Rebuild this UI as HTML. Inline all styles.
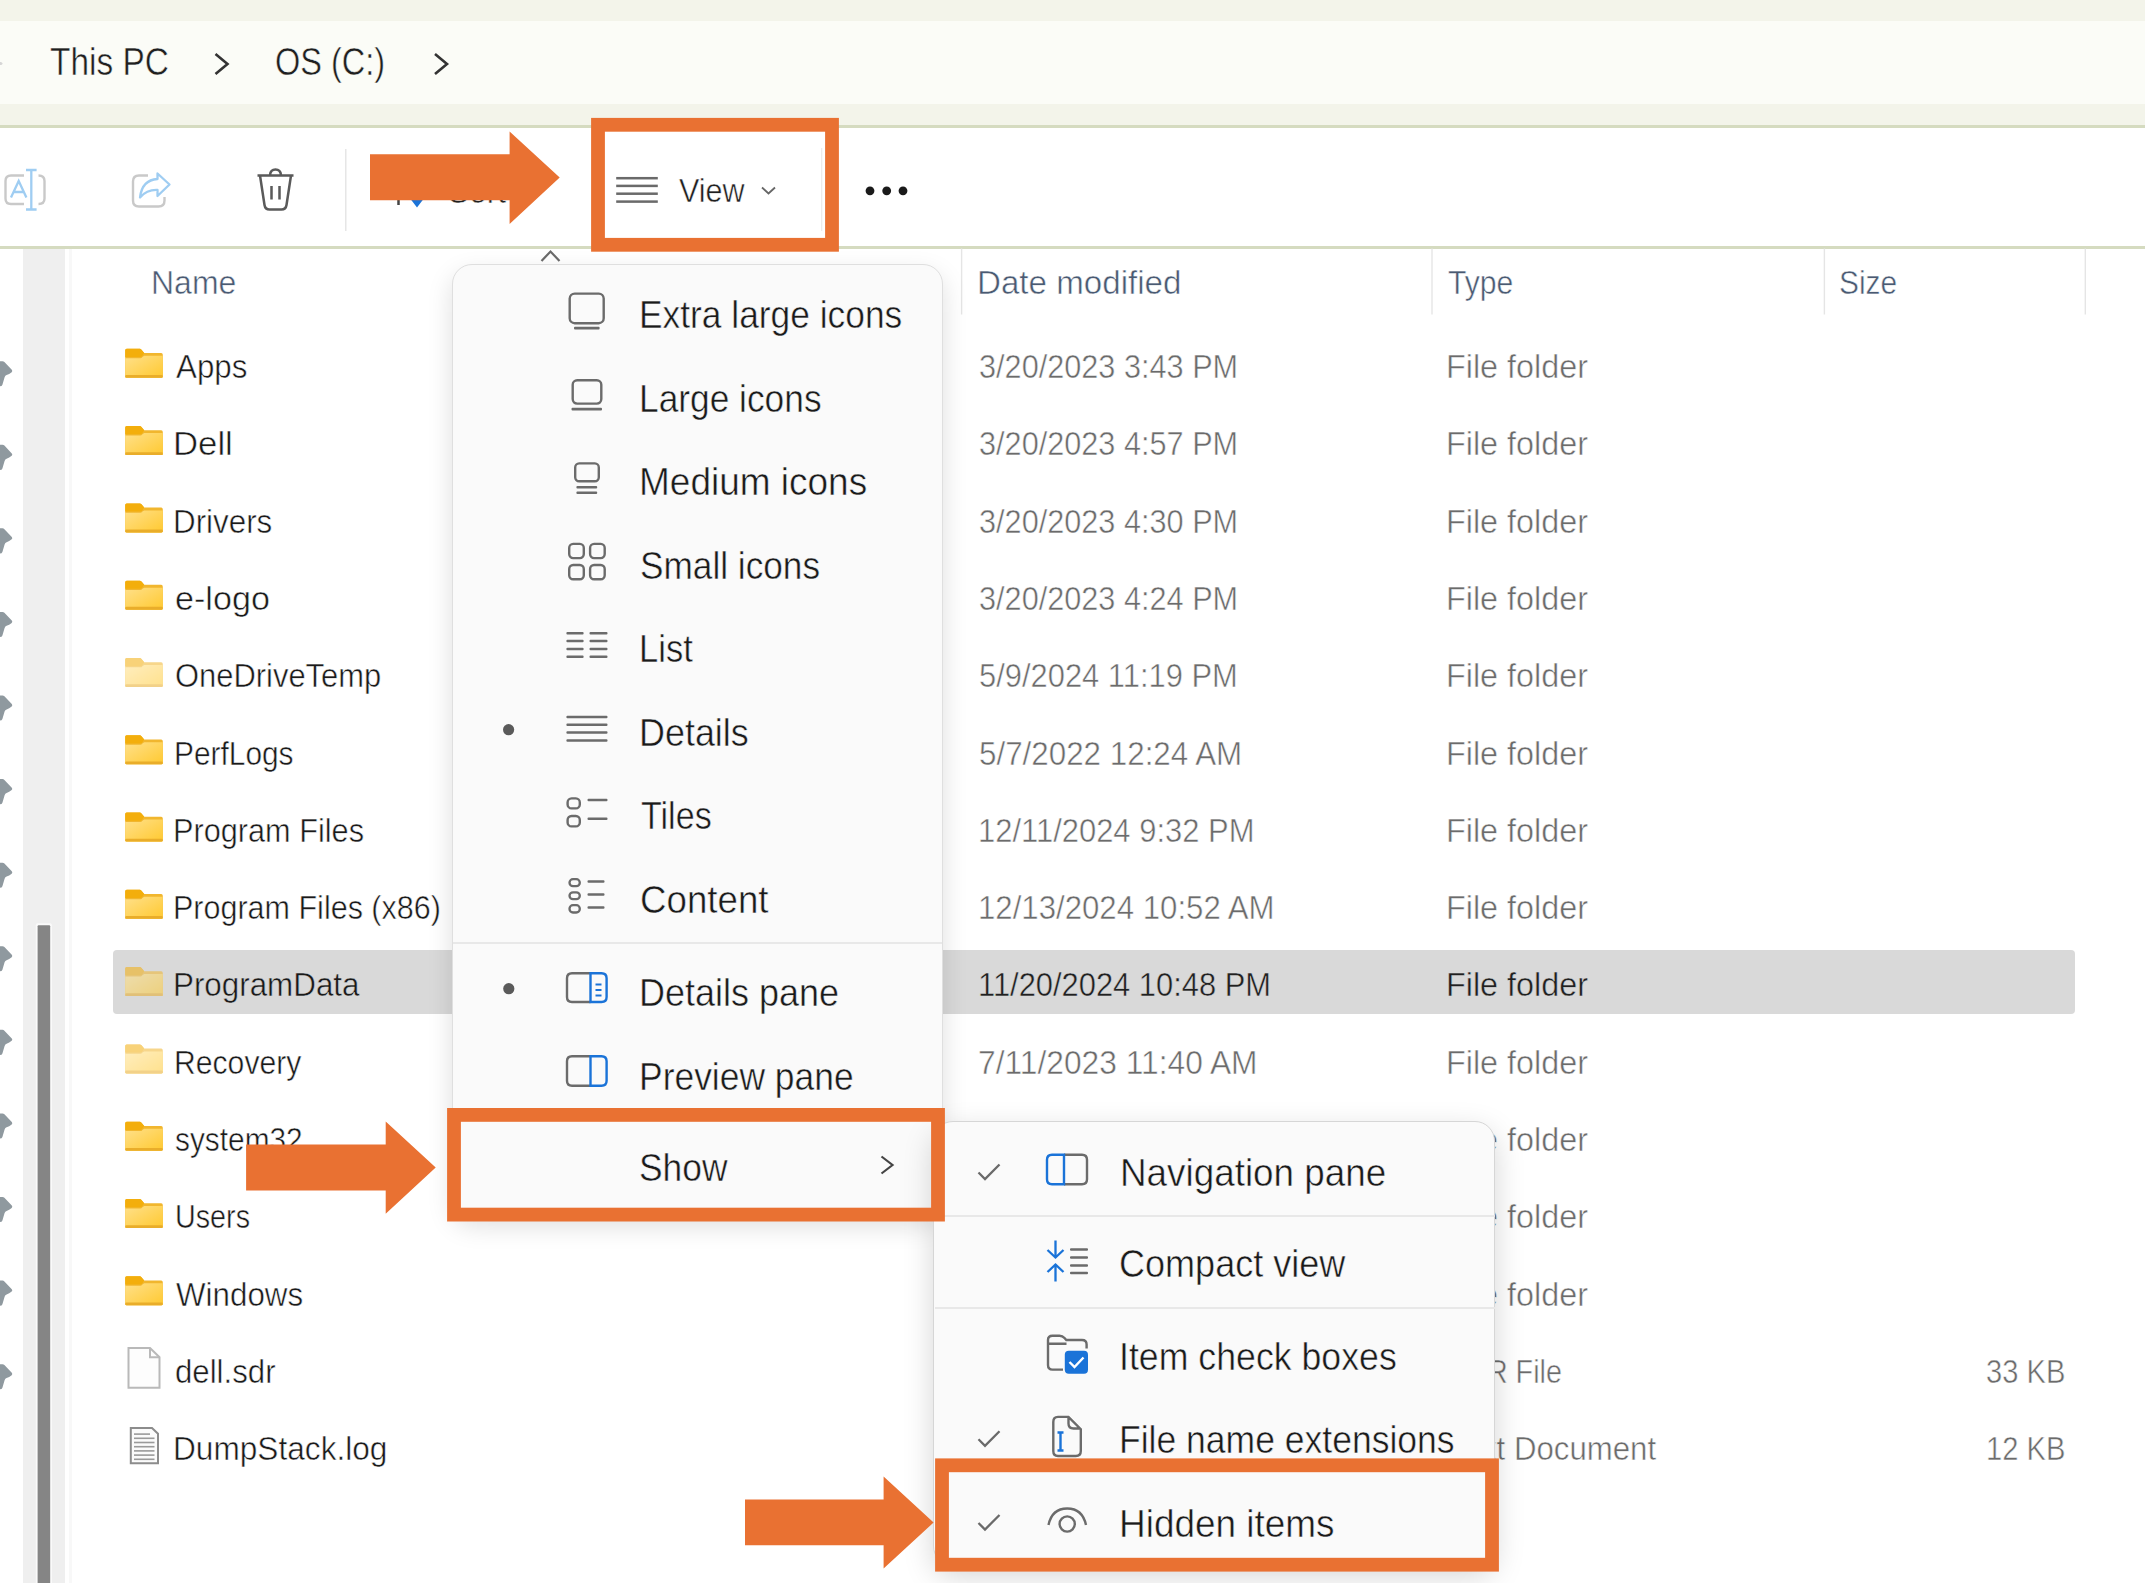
<!DOCTYPE html><html><head><meta charset="utf-8"><style>
html,body{margin:0;padding:0;width:2145px;height:1583px;overflow:hidden;background:#fff}
body{position:relative;font-family:"Liberation Sans",sans-serif}
.a{position:absolute}
.t{position:absolute;line-height:1;white-space:nowrap;transform-origin:0 0}
svg{position:absolute;left:0;top:0}
</style></head><body>
<div class="a" style="left:0;top:0;width:2145px;height:21px;background:#f3f4ea"></div>
<div class="a" style="left:0;top:21px;width:2145px;height:83px;background:#fbfcf7"></div>
<div class="a" style="left:0;top:104px;width:2145px;height:21px;background:#f3f4ea"></div>
<div class="a" style="left:0;top:125px;width:2145px;height:2.5px;background:#d5dbc0"></div>
<div class="a" style="left:0;top:246px;width:2145px;height:2.5px;background:#d5dbc0"></div>
<div class="a" style="left:23px;top:248.5px;width:41.6px;height:1335px;background:#efefef"></div>
<div class="a" style="left:69px;top:248.5px;width:2.6px;height:1335px;background:#f8f8f8"></div>
<div class="a" style="left:112.7px;top:950.3px;width:1962.8px;height:64.1px;background:#d9d9d9;border-radius:4px"></div>
<svg width="2145" height="1583" viewBox="0 0 2145 1583">
<defs><linearGradient id="fg" x1="0" y1="0" x2="1" y2="1"><stop offset="0" stop-color="#ffe08a"/><stop offset="1" stop-color="#ffc930"/></linearGradient></defs>
<polyline points="215.5,54 227.5,64 215.5,74" fill="none" stroke="#333" stroke-width="2.6"/>
<polyline points="435,54 447,64 435,74" fill="none" stroke="#333" stroke-width="2.6"/>
<path d="M24,175.5 H11 Q5.5,175.5 5.5,181 V198.5 Q5.5,204 11,204 H24 M38.5,175.5 Q44.5,175.5 44.5,181 V198.5 Q44.5,204 38.5,204" fill="none" stroke="#c9c9c9" stroke-width="2.4"/>
<path d="M31.3,170 V209.5 M26,170 H36.6 M26,209.5 H36.6" fill="none" stroke="#9fcdf2" stroke-width="2.3"/>
<path d="M11,197.5 L18.7,181 L26.4,197.5 M13.8,192 H23.6" fill="none" stroke="#9fcdf2" stroke-width="2.3"/>
<path d="M148,175.5 H139 Q133,175.5 133,181.5 V200.5 Q133,206.5 139,206.5 H158.5 Q164.5,206.5 164.5,200.5 V197" fill="none" stroke="#c9c9c9" stroke-width="2.4"/>
<path d="M157.5,173.5 L169.5,184.5 L157.5,196 V190 Q147,189.5 140,197.5 Q142,180 157.5,179 Z" fill="none" stroke="#9fcdf2" stroke-width="2.3" stroke-linejoin="round"/>
<path d="M257.5,175.5 H293.5 M260,175.5 L264.5,205 Q265.2,209.5 269.5,209.5 H281.5 Q285.8,209.5 286.5,205 L291,175.5 M270,175 Q270.5,169.5 275.5,169.5 Q280.5,169.5 281,175 M271.5,186 V199.5 M279.5,186 V199.5" fill="none" stroke="#5a5a5a" stroke-width="2.5"/>
<rect x="345" y="149" width="1.5" height="82" fill="#e6e6e6"/>
<path d="M398.5,160 V205" stroke="#444" stroke-width="2.5"/>
<polygon points="410.5,199 423.5,199 417,207.5" fill="#1a73d8"/>
<path d="M417,160 V200" stroke="#1a73d8" stroke-width="2.5"/>
<rect x="616.2" y="176.95" width="41.6" height="2.5" fill="#6a6a6a"/>
<rect x="616.2" y="184.65" width="41.6" height="2.5" fill="#6a6a6a"/>
<rect x="616.2" y="192.45" width="41.6" height="2.5" fill="#6a6a6a"/>
<rect x="616.2" y="200.35" width="41.6" height="2.5" fill="#6a6a6a"/>
<polyline points="762,187.5 768.5,193.5 775,187.5" fill="none" stroke="#666" stroke-width="1.8"/>
<rect x="821" y="148" width="1.3" height="83" fill="#ececec"/>
<circle cx="870" cy="190.8" r="4.4" fill="#1a1a1a"/>
<circle cx="886.7" cy="190.8" r="4.4" fill="#1a1a1a"/>
<circle cx="903" cy="190.8" r="4.4" fill="#1a1a1a"/>
<rect x="960.9" y="248.5" width="1.4" height="66" fill="#e5e5e5"/>
<rect x="1431.3" y="248.5" width="1.4" height="66" fill="#e5e5e5"/>
<rect x="1823.7" y="248.5" width="1.4" height="66" fill="#e5e5e5"/>
<rect x="2084.6000000000004" y="248.5" width="1.4" height="66" fill="#e5e5e5"/>
<path transform="translate(0,361.20)" d="M0,0 L2.5,0 Q3.6,0 4.4,0.8 L11.8,8.6 Q12.9,9.9 11.7,11 Q9.2,13.1 6.6,13.9 Q5.1,14.5 4.6,16.1 L2.4,23.6 Q1.9,25.1 0,25.1 Z" fill="#8f999f"/>
<path transform="translate(0,444.78)" d="M0,0 L2.5,0 Q3.6,0 4.4,0.8 L11.8,8.6 Q12.9,9.9 11.7,11 Q9.2,13.1 6.6,13.9 Q5.1,14.5 4.6,16.1 L2.4,23.6 Q1.9,25.1 0,25.1 Z" fill="#8f999f"/>
<path transform="translate(0,528.36)" d="M0,0 L2.5,0 Q3.6,0 4.4,0.8 L11.8,8.6 Q12.9,9.9 11.7,11 Q9.2,13.1 6.6,13.9 Q5.1,14.5 4.6,16.1 L2.4,23.6 Q1.9,25.1 0,25.1 Z" fill="#8f999f"/>
<path transform="translate(0,611.94)" d="M0,0 L2.5,0 Q3.6,0 4.4,0.8 L11.8,8.6 Q12.9,9.9 11.7,11 Q9.2,13.1 6.6,13.9 Q5.1,14.5 4.6,16.1 L2.4,23.6 Q1.9,25.1 0,25.1 Z" fill="#8f999f"/>
<path transform="translate(0,695.52)" d="M0,0 L2.5,0 Q3.6,0 4.4,0.8 L11.8,8.6 Q12.9,9.9 11.7,11 Q9.2,13.1 6.6,13.9 Q5.1,14.5 4.6,16.1 L2.4,23.6 Q1.9,25.1 0,25.1 Z" fill="#8f999f"/>
<path transform="translate(0,779.10)" d="M0,0 L2.5,0 Q3.6,0 4.4,0.8 L11.8,8.6 Q12.9,9.9 11.7,11 Q9.2,13.1 6.6,13.9 Q5.1,14.5 4.6,16.1 L2.4,23.6 Q1.9,25.1 0,25.1 Z" fill="#8f999f"/>
<path transform="translate(0,862.68)" d="M0,0 L2.5,0 Q3.6,0 4.4,0.8 L11.8,8.6 Q12.9,9.9 11.7,11 Q9.2,13.1 6.6,13.9 Q5.1,14.5 4.6,16.1 L2.4,23.6 Q1.9,25.1 0,25.1 Z" fill="#8f999f"/>
<path transform="translate(0,946.26)" d="M0,0 L2.5,0 Q3.6,0 4.4,0.8 L11.8,8.6 Q12.9,9.9 11.7,11 Q9.2,13.1 6.6,13.9 Q5.1,14.5 4.6,16.1 L2.4,23.6 Q1.9,25.1 0,25.1 Z" fill="#8f999f"/>
<path transform="translate(0,1029.84)" d="M0,0 L2.5,0 Q3.6,0 4.4,0.8 L11.8,8.6 Q12.9,9.9 11.7,11 Q9.2,13.1 6.6,13.9 Q5.1,14.5 4.6,16.1 L2.4,23.6 Q1.9,25.1 0,25.1 Z" fill="#8f999f"/>
<path transform="translate(0,1113.42)" d="M0,0 L2.5,0 Q3.6,0 4.4,0.8 L11.8,8.6 Q12.9,9.9 11.7,11 Q9.2,13.1 6.6,13.9 Q5.1,14.5 4.6,16.1 L2.4,23.6 Q1.9,25.1 0,25.1 Z" fill="#8f999f"/>
<path transform="translate(0,1197.00)" d="M0,0 L2.5,0 Q3.6,0 4.4,0.8 L11.8,8.6 Q12.9,9.9 11.7,11 Q9.2,13.1 6.6,13.9 Q5.1,14.5 4.6,16.1 L2.4,23.6 Q1.9,25.1 0,25.1 Z" fill="#8f999f"/>
<path transform="translate(0,1280.58)" d="M0,0 L2.5,0 Q3.6,0 4.4,0.8 L11.8,8.6 Q12.9,9.9 11.7,11 Q9.2,13.1 6.6,13.9 Q5.1,14.5 4.6,16.1 L2.4,23.6 Q1.9,25.1 0,25.1 Z" fill="#8f999f"/>
<path transform="translate(0,1364.16)" d="M0,0 L2.5,0 Q3.6,0 4.4,0.8 L11.8,8.6 Q12.9,9.9 11.7,11 Q9.2,13.1 6.6,13.9 Q5.1,14.5 4.6,16.1 L2.4,23.6 Q1.9,25.1 0,25.1 Z" fill="#8f999f"/>
<rect x="35.8" y="923.3" width="16.2" height="700" rx="2" fill="#fafafa"/>
<rect x="37.6" y="925.3" width="12.6" height="700" rx="1" fill="#858585"/>
<ellipse cx="0.5" cy="63.5" rx="2" ry="1.6" fill="#d6d6d6"/>
<g transform="translate(125.2,348.8)">
<path d="M1.5,0 H14.5 Q15.5,0 16.5,1.2 L19,4.2 H36 Q37.6,4.2 37.6,6 V27.4 Q37.6,29 36,29 H1.6 Q0,29 0,27.4 V1.5 Q0,0 1.5,0 Z" fill="#f1b62e"/>
<path d="M1.5,0 H14.5 Q15.5,0 16.5,1.2 L19,4.2 L17,7.2 Q16.2,8.2 14.8,8.2 H0 V1.5 Q0,0 1.5,0 Z" fill="#f3ae0c"/>
<path d="M0,9.4 H15 Q16.4,9.4 17.2,8.2 L19,7 H37.6 V27.4 Q37.6,29 36,29 H1.6 Q0,29 0,27.4 Z" fill="url(#fg)"/>
<rect x="0" y="26.2" width="37.6" height="2.8" rx="1.2" fill="#e9ad2a"/>
</g>
<g transform="translate(125.2,426.09000000000003)">
<path d="M1.5,0 H14.5 Q15.5,0 16.5,1.2 L19,4.2 H36 Q37.6,4.2 37.6,6 V27.4 Q37.6,29 36,29 H1.6 Q0,29 0,27.4 V1.5 Q0,0 1.5,0 Z" fill="#f1b62e"/>
<path d="M1.5,0 H14.5 Q15.5,0 16.5,1.2 L19,4.2 L17,7.2 Q16.2,8.2 14.8,8.2 H0 V1.5 Q0,0 1.5,0 Z" fill="#f3ae0c"/>
<path d="M0,9.4 H15 Q16.4,9.4 17.2,8.2 L19,7 H37.6 V27.4 Q37.6,29 36,29 H1.6 Q0,29 0,27.4 Z" fill="url(#fg)"/>
<rect x="0" y="26.2" width="37.6" height="2.8" rx="1.2" fill="#e9ad2a"/>
</g>
<g transform="translate(125.2,503.38)">
<path d="M1.5,0 H14.5 Q15.5,0 16.5,1.2 L19,4.2 H36 Q37.6,4.2 37.6,6 V27.4 Q37.6,29 36,29 H1.6 Q0,29 0,27.4 V1.5 Q0,0 1.5,0 Z" fill="#f1b62e"/>
<path d="M1.5,0 H14.5 Q15.5,0 16.5,1.2 L19,4.2 L17,7.2 Q16.2,8.2 14.8,8.2 H0 V1.5 Q0,0 1.5,0 Z" fill="#f3ae0c"/>
<path d="M0,9.4 H15 Q16.4,9.4 17.2,8.2 L19,7 H37.6 V27.4 Q37.6,29 36,29 H1.6 Q0,29 0,27.4 Z" fill="url(#fg)"/>
<rect x="0" y="26.2" width="37.6" height="2.8" rx="1.2" fill="#e9ad2a"/>
</g>
<g transform="translate(125.2,580.6700000000001)">
<path d="M1.5,0 H14.5 Q15.5,0 16.5,1.2 L19,4.2 H36 Q37.6,4.2 37.6,6 V27.4 Q37.6,29 36,29 H1.6 Q0,29 0,27.4 V1.5 Q0,0 1.5,0 Z" fill="#f1b62e"/>
<path d="M1.5,0 H14.5 Q15.5,0 16.5,1.2 L19,4.2 L17,7.2 Q16.2,8.2 14.8,8.2 H0 V1.5 Q0,0 1.5,0 Z" fill="#f3ae0c"/>
<path d="M0,9.4 H15 Q16.4,9.4 17.2,8.2 L19,7 H37.6 V27.4 Q37.6,29 36,29 H1.6 Q0,29 0,27.4 Z" fill="url(#fg)"/>
<rect x="0" y="26.2" width="37.6" height="2.8" rx="1.2" fill="#e9ad2a"/>
</g>
<g transform="translate(125.2,657.96)" opacity="0.55">
<path d="M1.5,0 H14.5 Q15.5,0 16.5,1.2 L19,4.2 H36 Q37.6,4.2 37.6,6 V27.4 Q37.6,29 36,29 H1.6 Q0,29 0,27.4 V1.5 Q0,0 1.5,0 Z" fill="#f1b62e"/>
<path d="M1.5,0 H14.5 Q15.5,0 16.5,1.2 L19,4.2 L17,7.2 Q16.2,8.2 14.8,8.2 H0 V1.5 Q0,0 1.5,0 Z" fill="#f3ae0c"/>
<path d="M0,9.4 H15 Q16.4,9.4 17.2,8.2 L19,7 H37.6 V27.4 Q37.6,29 36,29 H1.6 Q0,29 0,27.4 Z" fill="url(#fg)"/>
<rect x="0" y="26.2" width="37.6" height="2.8" rx="1.2" fill="#e9ad2a"/>
</g>
<g transform="translate(125.2,735.25)">
<path d="M1.5,0 H14.5 Q15.5,0 16.5,1.2 L19,4.2 H36 Q37.6,4.2 37.6,6 V27.4 Q37.6,29 36,29 H1.6 Q0,29 0,27.4 V1.5 Q0,0 1.5,0 Z" fill="#f1b62e"/>
<path d="M1.5,0 H14.5 Q15.5,0 16.5,1.2 L19,4.2 L17,7.2 Q16.2,8.2 14.8,8.2 H0 V1.5 Q0,0 1.5,0 Z" fill="#f3ae0c"/>
<path d="M0,9.4 H15 Q16.4,9.4 17.2,8.2 L19,7 H37.6 V27.4 Q37.6,29 36,29 H1.6 Q0,29 0,27.4 Z" fill="url(#fg)"/>
<rect x="0" y="26.2" width="37.6" height="2.8" rx="1.2" fill="#e9ad2a"/>
</g>
<g transform="translate(125.2,812.54)">
<path d="M1.5,0 H14.5 Q15.5,0 16.5,1.2 L19,4.2 H36 Q37.6,4.2 37.6,6 V27.4 Q37.6,29 36,29 H1.6 Q0,29 0,27.4 V1.5 Q0,0 1.5,0 Z" fill="#f1b62e"/>
<path d="M1.5,0 H14.5 Q15.5,0 16.5,1.2 L19,4.2 L17,7.2 Q16.2,8.2 14.8,8.2 H0 V1.5 Q0,0 1.5,0 Z" fill="#f3ae0c"/>
<path d="M0,9.4 H15 Q16.4,9.4 17.2,8.2 L19,7 H37.6 V27.4 Q37.6,29 36,29 H1.6 Q0,29 0,27.4 Z" fill="url(#fg)"/>
<rect x="0" y="26.2" width="37.6" height="2.8" rx="1.2" fill="#e9ad2a"/>
</g>
<g transform="translate(125.2,889.8300000000002)">
<path d="M1.5,0 H14.5 Q15.5,0 16.5,1.2 L19,4.2 H36 Q37.6,4.2 37.6,6 V27.4 Q37.6,29 36,29 H1.6 Q0,29 0,27.4 V1.5 Q0,0 1.5,0 Z" fill="#f1b62e"/>
<path d="M1.5,0 H14.5 Q15.5,0 16.5,1.2 L19,4.2 L17,7.2 Q16.2,8.2 14.8,8.2 H0 V1.5 Q0,0 1.5,0 Z" fill="#f3ae0c"/>
<path d="M0,9.4 H15 Q16.4,9.4 17.2,8.2 L19,7 H37.6 V27.4 Q37.6,29 36,29 H1.6 Q0,29 0,27.4 Z" fill="url(#fg)"/>
<rect x="0" y="26.2" width="37.6" height="2.8" rx="1.2" fill="#e9ad2a"/>
</g>
<g transform="translate(125.2,967.1200000000001)" opacity="0.55">
<path d="M1.5,0 H14.5 Q15.5,0 16.5,1.2 L19,4.2 H36 Q37.6,4.2 37.6,6 V27.4 Q37.6,29 36,29 H1.6 Q0,29 0,27.4 V1.5 Q0,0 1.5,0 Z" fill="#f1b62e"/>
<path d="M1.5,0 H14.5 Q15.5,0 16.5,1.2 L19,4.2 L17,7.2 Q16.2,8.2 14.8,8.2 H0 V1.5 Q0,0 1.5,0 Z" fill="#f3ae0c"/>
<path d="M0,9.4 H15 Q16.4,9.4 17.2,8.2 L19,7 H37.6 V27.4 Q37.6,29 36,29 H1.6 Q0,29 0,27.4 Z" fill="url(#fg)"/>
<rect x="0" y="26.2" width="37.6" height="2.8" rx="1.2" fill="#e9ad2a"/>
</g>
<g transform="translate(125.2,1044.41)" opacity="0.55">
<path d="M1.5,0 H14.5 Q15.5,0 16.5,1.2 L19,4.2 H36 Q37.6,4.2 37.6,6 V27.4 Q37.6,29 36,29 H1.6 Q0,29 0,27.4 V1.5 Q0,0 1.5,0 Z" fill="#f1b62e"/>
<path d="M1.5,0 H14.5 Q15.5,0 16.5,1.2 L19,4.2 L17,7.2 Q16.2,8.2 14.8,8.2 H0 V1.5 Q0,0 1.5,0 Z" fill="#f3ae0c"/>
<path d="M0,9.4 H15 Q16.4,9.4 17.2,8.2 L19,7 H37.6 V27.4 Q37.6,29 36,29 H1.6 Q0,29 0,27.4 Z" fill="url(#fg)"/>
<rect x="0" y="26.2" width="37.6" height="2.8" rx="1.2" fill="#e9ad2a"/>
</g>
<g transform="translate(125.2,1121.7)">
<path d="M1.5,0 H14.5 Q15.5,0 16.5,1.2 L19,4.2 H36 Q37.6,4.2 37.6,6 V27.4 Q37.6,29 36,29 H1.6 Q0,29 0,27.4 V1.5 Q0,0 1.5,0 Z" fill="#f1b62e"/>
<path d="M1.5,0 H14.5 Q15.5,0 16.5,1.2 L19,4.2 L17,7.2 Q16.2,8.2 14.8,8.2 H0 V1.5 Q0,0 1.5,0 Z" fill="#f3ae0c"/>
<path d="M0,9.4 H15 Q16.4,9.4 17.2,8.2 L19,7 H37.6 V27.4 Q37.6,29 36,29 H1.6 Q0,29 0,27.4 Z" fill="url(#fg)"/>
<rect x="0" y="26.2" width="37.6" height="2.8" rx="1.2" fill="#e9ad2a"/>
</g>
<g transform="translate(125.2,1198.99)">
<path d="M1.5,0 H14.5 Q15.5,0 16.5,1.2 L19,4.2 H36 Q37.6,4.2 37.6,6 V27.4 Q37.6,29 36,29 H1.6 Q0,29 0,27.4 V1.5 Q0,0 1.5,0 Z" fill="#f1b62e"/>
<path d="M1.5,0 H14.5 Q15.5,0 16.5,1.2 L19,4.2 L17,7.2 Q16.2,8.2 14.8,8.2 H0 V1.5 Q0,0 1.5,0 Z" fill="#f3ae0c"/>
<path d="M0,9.4 H15 Q16.4,9.4 17.2,8.2 L19,7 H37.6 V27.4 Q37.6,29 36,29 H1.6 Q0,29 0,27.4 Z" fill="url(#fg)"/>
<rect x="0" y="26.2" width="37.6" height="2.8" rx="1.2" fill="#e9ad2a"/>
</g>
<g transform="translate(125.2,1276.28)">
<path d="M1.5,0 H14.5 Q15.5,0 16.5,1.2 L19,4.2 H36 Q37.6,4.2 37.6,6 V27.4 Q37.6,29 36,29 H1.6 Q0,29 0,27.4 V1.5 Q0,0 1.5,0 Z" fill="#f1b62e"/>
<path d="M1.5,0 H14.5 Q15.5,0 16.5,1.2 L19,4.2 L17,7.2 Q16.2,8.2 14.8,8.2 H0 V1.5 Q0,0 1.5,0 Z" fill="#f3ae0c"/>
<path d="M0,9.4 H15 Q16.4,9.4 17.2,8.2 L19,7 H37.6 V27.4 Q37.6,29 36,29 H1.6 Q0,29 0,27.4 Z" fill="url(#fg)"/>
<rect x="0" y="26.2" width="37.6" height="2.8" rx="1.2" fill="#e9ad2a"/>
</g>
<path d="M128.5,1347.97 H150 L159.5,1357.17 V1387.67 H128.5 Z" fill="#fdfdfd" stroke="#b9b9b9" stroke-width="2"/>
<path d="M150,1347.97 V1357.17 H159.5" fill="none" stroke="#b9b9b9" stroke-width="2"/>
<path d="M130.8,1428.0600000000002 H152 L158,1433.7600000000002 V1463.2600000000002 H130.8 Z" fill="#fbfbfb" stroke="#8c8c8c" stroke-width="2"/>
<rect x="134" y="1433.3" width="16" height="1.6" fill="#9a9a9a"/>
<rect x="134" y="1437.5" width="20.5" height="1.6" fill="#9a9a9a"/>
<rect x="134" y="1441.7" width="20.5" height="1.6" fill="#9a9a9a"/>
<rect x="134" y="1445.9" width="20.5" height="1.6" fill="#9a9a9a"/>
<rect x="134" y="1450.1" width="20.5" height="1.6" fill="#9a9a9a"/>
<rect x="134" y="1454.3" width="20.5" height="1.6" fill="#9a9a9a"/>
<rect x="134" y="1458.5" width="20.5" height="1.6" fill="#9a9a9a"/>
</svg>
<div class="t" style="left:49.54px;top:42.84px;font-size:38.7px;color:#1f1f1f;-webkit-text-stroke:0.5px #fbfcf7;transform:scaleX(0.8637)">This PC</div>
<div class="t" style="left:275.32px;top:42.84px;font-size:38.7px;color:#1f1f1f;-webkit-text-stroke:0.5px #fbfcf7;transform:scaleX(0.8394)">OS (C:)</div>
<div class="t" style="left:678.70px;top:174.43px;font-size:33.4px;color:#1f1f1f;-webkit-text-stroke:0.5px #ffffff;transform:scaleX(0.9139)">View</div>
<div class="t" style="left:448.10px;top:174.73px;font-size:33.4px;color:#1f1f1f;-webkit-text-stroke:0.5px #ffffff;transform:scaleX(0.9492)">Sort</div>
<div class="t" style="left:150.83px;top:266.86px;font-size:32.3px;color:#4a5a72;-webkit-text-stroke:0.5px #ffffff;transform:scaleX(0.9902)">Name</div>
<div class="t" style="left:976.72px;top:266.86px;font-size:32.3px;color:#4a5a72;-webkit-text-stroke:0.5px #ffffff;transform:scaleX(1.0258)">Date modified</div>
<div class="t" style="left:1447.67px;top:266.86px;font-size:32.3px;color:#4a5a72;-webkit-text-stroke:0.5px #ffffff;transform:scaleX(0.9324)">Type</div>
<div class="t" style="left:1838.55px;top:266.86px;font-size:32.3px;color:#4a5a72;-webkit-text-stroke:0.5px #ffffff;transform:scaleX(0.9254)">Size</div>
<div class="t" style="left:176.30px;top:351.09px;font-size:32.5px;color:#1a1a1a;-webkit-text-stroke:0.5px #ffffff;transform:scaleX(0.9630)">Apps</div>
<div class="t" style="left:978.56px;top:351.09px;font-size:32.5px;color:#6b6b6b;-webkit-text-stroke:0.5px #ffffff;transform:scaleX(0.9435)">3/20/2023 3:43 PM</div>
<div class="t" style="left:1445.62px;top:351.09px;font-size:32.5px;color:#6b6b6b;-webkit-text-stroke:0.5px #ffffff;transform:scaleX(0.9950)">File folder</div>
<div class="t" style="left:173.09px;top:428.38px;font-size:32.5px;color:#1a1a1a;-webkit-text-stroke:0.5px #ffffff;transform:scaleX(1.0686)">Dell</div>
<div class="t" style="left:978.56px;top:428.38px;font-size:32.5px;color:#6b6b6b;-webkit-text-stroke:0.5px #ffffff;transform:scaleX(0.9435)">3/20/2023 4:57 PM</div>
<div class="t" style="left:1445.62px;top:428.38px;font-size:32.5px;color:#6b6b6b;-webkit-text-stroke:0.5px #ffffff;transform:scaleX(0.9950)">File folder</div>
<div class="t" style="left:173.41px;top:505.67px;font-size:32.5px;color:#1a1a1a;-webkit-text-stroke:0.5px #ffffff;transform:scaleX(0.9646)">Drivers</div>
<div class="t" style="left:978.56px;top:505.67px;font-size:32.5px;color:#6b6b6b;-webkit-text-stroke:0.5px #ffffff;transform:scaleX(0.9435)">3/20/2023 4:30 PM</div>
<div class="t" style="left:1445.62px;top:505.67px;font-size:32.5px;color:#6b6b6b;-webkit-text-stroke:0.5px #ffffff;transform:scaleX(0.9950)">File folder</div>
<div class="t" style="left:175.25px;top:582.96px;font-size:32.5px;color:#1a1a1a;-webkit-text-stroke:0.5px #ffffff;transform:scaleX(1.0500)">e-logo</div>
<div class="t" style="left:978.56px;top:582.96px;font-size:32.5px;color:#6b6b6b;-webkit-text-stroke:0.5px #ffffff;transform:scaleX(0.9435)">3/20/2023 4:24 PM</div>
<div class="t" style="left:1445.62px;top:582.96px;font-size:32.5px;color:#6b6b6b;-webkit-text-stroke:0.5px #ffffff;transform:scaleX(0.9950)">File folder</div>
<div class="t" style="left:175.35px;top:660.25px;font-size:32.5px;color:#1a1a1a;-webkit-text-stroke:0.5px #ffffff;transform:scaleX(0.9516)">OneDriveTemp</div>
<div class="t" style="left:978.55px;top:660.25px;font-size:32.5px;color:#6b6b6b;-webkit-text-stroke:0.5px #ffffff;transform:scaleX(0.9506)">5/9/2024 11:19 PM</div>
<div class="t" style="left:1445.62px;top:660.25px;font-size:32.5px;color:#6b6b6b;-webkit-text-stroke:0.5px #ffffff;transform:scaleX(0.9950)">File folder</div>
<div class="t" style="left:173.54px;top:737.54px;font-size:32.5px;color:#1a1a1a;-webkit-text-stroke:0.5px #ffffff;transform:scaleX(0.9190)">PerfLogs</div>
<div class="t" style="left:978.54px;top:737.54px;font-size:32.5px;color:#6b6b6b;-webkit-text-stroke:0.5px #ffffff;transform:scaleX(0.9647)">5/7/2022 12:24 AM</div>
<div class="t" style="left:1445.62px;top:737.54px;font-size:32.5px;color:#6b6b6b;-webkit-text-stroke:0.5px #ffffff;transform:scaleX(0.9950)">File folder</div>
<div class="t" style="left:173.47px;top:814.83px;font-size:32.5px;color:#1a1a1a;-webkit-text-stroke:0.5px #ffffff;transform:scaleX(0.9444)">Program Files</div>
<div class="t" style="left:977.60px;top:814.83px;font-size:32.5px;color:#6b6b6b;-webkit-text-stroke:0.5px #ffffff;transform:scaleX(0.9521)">12/11/2024 9:32 PM</div>
<div class="t" style="left:1445.62px;top:814.83px;font-size:32.5px;color:#6b6b6b;-webkit-text-stroke:0.5px #ffffff;transform:scaleX(0.9950)">File folder</div>
<div class="t" style="left:173.48px;top:892.12px;font-size:32.5px;color:#1a1a1a;-webkit-text-stroke:0.5px #ffffff;transform:scaleX(0.9388)">Program Files (x86)</div>
<div class="t" style="left:977.58px;top:892.12px;font-size:32.5px;color:#6b6b6b;-webkit-text-stroke:0.5px #ffffff;transform:scaleX(0.9593)">12/13/2024 10:52 AM</div>
<div class="t" style="left:1445.62px;top:892.12px;font-size:32.5px;color:#6b6b6b;-webkit-text-stroke:0.5px #ffffff;transform:scaleX(0.9950)">File folder</div>
<div class="t" style="left:173.41px;top:969.41px;font-size:32.5px;color:#1a1a1a;-webkit-text-stroke:0.5px #d9d9d9;transform:scaleX(0.9649)">ProgramData</div>
<div class="t" style="left:977.60px;top:969.41px;font-size:32.5px;color:#202020;-webkit-text-stroke:0.5px #d9d9d9;transform:scaleX(0.9500)">11/20/2024 10:48 PM</div>
<div class="t" style="left:1445.62px;top:969.41px;font-size:32.5px;color:#202020;-webkit-text-stroke:0.5px #d9d9d9;transform:scaleX(0.9950)">File folder</div>
<div class="t" style="left:173.52px;top:1046.70px;font-size:32.5px;color:#1a1a1a;-webkit-text-stroke:0.5px #ffffff;transform:scaleX(0.9276)">Recovery</div>
<div class="t" style="left:977.55px;top:1046.70px;font-size:32.5px;color:#6b6b6b;-webkit-text-stroke:0.5px #ffffff;transform:scaleX(0.9770)">7/11/2023 11:40 AM</div>
<div class="t" style="left:1445.62px;top:1046.70px;font-size:32.5px;color:#6b6b6b;-webkit-text-stroke:0.5px #ffffff;transform:scaleX(0.9950)">File folder</div>
<div class="t" style="left:175.38px;top:1123.99px;font-size:32.5px;color:#1a1a1a;-webkit-text-stroke:0.5px #ffffff;transform:scaleX(0.9182)">system32</div>
<div class="t" style="left:1445.62px;top:1123.99px;font-size:32.5px;color:#6b6b6b;-webkit-text-stroke:0.5px #ffffff;transform:scaleX(0.9950)">File folder</div>
<div class="t" style="left:174.53px;top:1201.28px;font-size:32.5px;color:#1a1a1a;-webkit-text-stroke:0.5px #ffffff;transform:scaleX(0.8841)">Users</div>
<div class="t" style="left:1445.62px;top:1201.28px;font-size:32.5px;color:#6b6b6b;-webkit-text-stroke:0.5px #ffffff;transform:scaleX(0.9950)">File folder</div>
<div class="t" style="left:176.30px;top:1278.57px;font-size:32.5px;color:#1a1a1a;-webkit-text-stroke:0.5px #ffffff;transform:scaleX(0.9641)">Windows</div>
<div class="t" style="left:1445.62px;top:1278.57px;font-size:32.5px;color:#6b6b6b;-webkit-text-stroke:0.5px #ffffff;transform:scaleX(0.9950)">File folder</div>
<div class="t" style="left:175.34px;top:1355.86px;font-size:32.5px;color:#1a1a1a;-webkit-text-stroke:0.5px #ffffff;transform:scaleX(0.9596)">dell.sdr</div>
<div class="t" style="left:1446.83px;top:1355.86px;font-size:32.5px;color:#6b6b6b;-webkit-text-stroke:0.5px #ffffff;transform:scaleX(0.8835)">SDR File</div>
<div class="t" style="left:1986.05px;top:1355.86px;font-size:32.5px;color:#6b6b6b;-webkit-text-stroke:0.5px #ffffff;transform:scaleX(0.8960)">33 KB</div>
<div class="t" style="left:173.38px;top:1433.15px;font-size:32.5px;color:#1a1a1a;-webkit-text-stroke:0.5px #ffffff;transform:scaleX(0.9730)">DumpStack.log</div>
<div class="t" style="left:1447.64px;top:1433.15px;font-size:32.5px;color:#6b6b6b;-webkit-text-stroke:0.5px #ffffff;transform:scaleX(0.9602)">Text Document</div>
<div class="t" style="left:1986.05px;top:1433.15px;font-size:32.5px;color:#6b6b6b;-webkit-text-stroke:0.5px #ffffff;transform:scaleX(0.8960)">12 KB</div>
<div class="a" style="left:451.5px;top:263.5px;width:489px;height:950px;background:#fafafa;border:1.5px solid #dfdfdf;border-radius:20px;box-shadow:0 10px 26px rgba(0,0,0,0.13)"></div>
<div class="a" style="left:453px;top:942px;width:489px;height:1.5px;background:#e8e8e8"></div>
<svg width="2145" height="1583" viewBox="0 0 2145 1583">
<polyline points="541.5,261 550.5,251.5 559.5,261" fill="none" stroke="#6a6a6a" stroke-width="2.2"/>
<rect x="569.7" y="293.6" width="34" height="29.6" rx="5" fill="none" stroke="#6b6b6b" stroke-width="2.4"/>
<rect x="574" y="326.8" width="25.6" height="2.8" rx="1" fill="#6b6b6b"/>
<rect x="572.7" y="380.2" width="28.6" height="23.4" rx="4.5" fill="none" stroke="#6b6b6b" stroke-width="2.4"/>
<rect x="571.5" y="407.7" width="30.5" height="2.8" rx="1" fill="#6b6b6b"/>
<rect x="575.2" y="463.4" width="23.6" height="17.9" rx="4" fill="none" stroke="#6b6b6b" stroke-width="2.4"/>
<rect x="576.4" y="486" width="20.8" height="2.6" rx="1" fill="#6b6b6b"/>
<rect x="576.4" y="491.4" width="20.8" height="2.6" rx="1" fill="#6b6b6b"/>
<rect x="569.2" y="543.9" width="14.6" height="14.2" rx="4" fill="none" stroke="#6b6b6b" stroke-width="2.4"/>
<rect x="590.1" y="543.9" width="14.6" height="14.2" rx="4" fill="none" stroke="#6b6b6b" stroke-width="2.4"/>
<rect x="569.2" y="565" width="14.6" height="14.2" rx="4" fill="none" stroke="#6b6b6b" stroke-width="2.4"/>
<rect x="590.1" y="565" width="14.6" height="14.2" rx="4" fill="none" stroke="#6b6b6b" stroke-width="2.4"/>
<rect x="566.4" y="632.05" width="17.2" height="2.5" rx="1" fill="#6b6b6b"/>
<rect x="589.5" y="632.05" width="18" height="2.5" rx="1" fill="#6b6b6b"/>
<rect x="566.4" y="639.85" width="17.2" height="2.5" rx="1" fill="#6b6b6b"/>
<rect x="589.5" y="639.85" width="18" height="2.5" rx="1" fill="#6b6b6b"/>
<rect x="566.4" y="647.75" width="17.2" height="2.5" rx="1" fill="#6b6b6b"/>
<rect x="589.5" y="647.75" width="18" height="2.5" rx="1" fill="#6b6b6b"/>
<rect x="566.4" y="655.55" width="17.2" height="2.5" rx="1" fill="#6b6b6b"/>
<rect x="589.5" y="655.55" width="18" height="2.5" rx="1" fill="#6b6b6b"/>
<rect x="566.4" y="715.75" width="41.1" height="2.5" rx="1" fill="#6b6b6b"/>
<rect x="566.4" y="723.55" width="41.1" height="2.5" rx="1" fill="#6b6b6b"/>
<rect x="566.4" y="731.35" width="41.1" height="2.5" rx="1" fill="#6b6b6b"/>
<rect x="566.4" y="739.15" width="41.1" height="2.5" rx="1" fill="#6b6b6b"/>
<circle cx="508.6" cy="729.7" r="5.6" fill="#5a5a5a"/>
<rect x="567.6" y="798.4" width="12.2" height="10" rx="4" fill="none" stroke="#6b6b6b" stroke-width="2.4"/>
<rect x="567.6" y="816" width="12.2" height="10.4" rx="4" fill="none" stroke="#6b6b6b" stroke-width="2.4"/>
<rect x="587.5" y="798.8" width="20" height="2.5" rx="1" fill="#6b6b6b"/>
<rect x="587.5" y="817.5" width="20" height="2.5" rx="1" fill="#6b6b6b"/>
<rect x="569.5" y="879.2" width="10.3" height="6.9" rx="3.5" fill="none" stroke="#6b6b6b" stroke-width="2.3"/>
<rect x="569.5" y="892.4000000000001" width="10.3" height="6.8" rx="3.5" fill="none" stroke="#6b6b6b" stroke-width="2.3"/>
<rect x="569.5" y="905.2" width="10.3" height="7.3" rx="3.5" fill="none" stroke="#6b6b6b" stroke-width="2.3"/>
<rect x="587.5" y="880.15" width="17" height="2.5" rx="1" fill="#6b6b6b"/>
<rect x="587.5" y="893.25" width="17" height="2.5" rx="1" fill="#6b6b6b"/>
<rect x="587.5" y="906.15" width="17" height="2.5" rx="1" fill="#6b6b6b"/>
<circle cx="508.8" cy="988.7" r="5.6" fill="#5a5a5a"/>
<path d="M590.5,973.2 H572 Q567,973.2 567,978.2 V997 Q567,1002 572,1002 H590.5" fill="none" stroke="#6b6b6b" stroke-width="2.4"/>
<path d="M590.5,973.2 H601.5 Q606.6,973.2 606.6,978.2 V997 Q606.6,1002 601.5,1002 H590.5 Z" fill="none" stroke="#1a73d8" stroke-width="2.4"/>
<rect x="595.5" y="983.5" width="6" height="2" fill="#1a73d8"/>
<rect x="595.5" y="989" width="6" height="2" fill="#1a73d8"/>
<rect x="595.5" y="994.5" width="6" height="2" fill="#1a73d8"/>
<path d="M590.5,1056.2 H572 Q567,1056.2 567,1061.2 V1080.8 Q567,1085.8 572,1085.8 H590.5" fill="none" stroke="#6b6b6b" stroke-width="2.4"/>
<path d="M590.5,1056.2 H601.5 Q606.6,1056.2 606.6,1061.2 V1080.8 Q606.6,1085.8 601.5,1085.8 H590.5 Z" fill="none" stroke="#1a73d8" stroke-width="2.4"/>
<polyline points="881.5,1156.5 892.5,1165 881.5,1173.5" fill="none" stroke="#444" stroke-width="2.2"/>
</svg>
<div class="t" style="left:639.10px;top:295.23px;font-size:39.3px;color:#1a1a1a;-webkit-text-stroke:0.5px #fafafa;transform:scaleX(0.8993)">Extra large icons</div>
<div class="t" style="left:639.10px;top:378.73px;font-size:39.3px;color:#1a1a1a;-webkit-text-stroke:0.5px #fafafa;transform:scaleX(0.8985)">Large icons</div>
<div class="t" style="left:638.98px;top:462.23px;font-size:39.3px;color:#1a1a1a;-webkit-text-stroke:0.5px #fafafa;transform:scaleX(0.9412)">Medium icons</div>
<div class="t" style="left:640.01px;top:545.73px;font-size:39.3px;color:#1a1a1a;-webkit-text-stroke:0.5px #fafafa;transform:scaleX(0.8960)">Small icons</div>
<div class="t" style="left:639.16px;top:629.23px;font-size:39.3px;color:#1a1a1a;-webkit-text-stroke:0.5px #fafafa;transform:scaleX(0.8793)">List</div>
<div class="t" style="left:639.06px;top:712.73px;font-size:39.3px;color:#1a1a1a;-webkit-text-stroke:0.5px #fafafa;transform:scaleX(0.9138)">Details</div>
<div class="t" style="left:640.93px;top:796.23px;font-size:39.3px;color:#1a1a1a;-webkit-text-stroke:0.5px #fafafa;transform:scaleX(0.8671)">Tiles</div>
<div class="t" style="left:639.93px;top:879.73px;font-size:39.3px;color:#1a1a1a;-webkit-text-stroke:0.5px #fafafa;transform:scaleX(0.9338)">Content</div>
<div class="t" style="left:639.05px;top:973.03px;font-size:39.3px;color:#1a1a1a;-webkit-text-stroke:0.5px #fafafa;transform:scaleX(0.9159)">Details pane</div>
<div class="t" style="left:639.09px;top:1056.53px;font-size:39.3px;color:#1a1a1a;-webkit-text-stroke:0.5px #fafafa;transform:scaleX(0.9017)">Preview pane</div>
<div class="t" style="left:638.90px;top:1147.73px;font-size:39.3px;color:#1a1a1a;-webkit-text-stroke:0.5px #fafafa;transform:scaleX(0.9000)">Show</div>
<div class="a" style="left:932.8px;top:1121px;width:560px;height:443px;background:#fafafa;border:1.5px solid #d6d6d6;border-radius:20px;box-shadow:0 10px 30px rgba(0,0,0,0.17)"></div>
<div class="a" style="left:934.5px;top:1215.3px;width:560px;height:1.5px;background:#e8e8e8"></div>
<div class="a" style="left:934.5px;top:1307.3px;width:560px;height:1.5px;background:#e8e8e8"></div>
<svg width="2145" height="1583" viewBox="0 0 2145 1583">
<polyline points="978.5,1172.5 985,1179.0 999.5,1164.5" fill="none" stroke="#6a6a6a" stroke-width="2.3"/>
<polyline points="978.5,1439.3 985,1445.8 999.5,1431.3" fill="none" stroke="#6a6a6a" stroke-width="2.3"/>
<polyline points="978.5,1523 985,1529.5 999.5,1515" fill="none" stroke="#6a6a6a" stroke-width="2.3"/>
<path d="M1064,1154.7 H1082 Q1087,1154.7 1087,1159.7 V1179.3 Q1087,1184.3 1082,1184.3 H1064" fill="none" stroke="#6b6b6b" stroke-width="2.4"/>
<path d="M1064,1154.7 H1052 Q1047,1154.7 1047,1159.7 V1179.3 Q1047,1184.3 1052,1184.3 H1064 Z" fill="none" stroke="#1a73d8" stroke-width="2.4"/>
<path d="M1055.5,1240.5 V1257 M1047.5,1250 L1055.5,1257.5 L1063.5,1250 M1055.5,1264.5 V1281.5 M1047.5,1272 L1055.5,1264.5 L1063.5,1272" fill="none" stroke="#1a73d8" stroke-width="2.3"/>
<rect x="1070" y="1248.15" width="18" height="2.5" rx="1" fill="#6b6b6b"/>
<rect x="1070" y="1256.35" width="18" height="2.5" rx="1" fill="#6b6b6b"/>
<rect x="1070" y="1264.15" width="18" height="2.5" rx="1" fill="#6b6b6b"/>
<rect x="1070" y="1271.75" width="18" height="2.5" rx="1" fill="#6b6b6b"/>
<path d="M1063,1369.6 H1052.5 Q1048,1369.6 1048,1365 V1340 Q1048,1335.7 1052.5,1335.7 H1059.5 Q1062.5,1335.7 1064.5,1338 L1066.3,1340 H1082 Q1086.6,1340 1086.6,1344.5 V1348.5 M1048,1343.7 H1066.5" fill="none" stroke="#6b6b6b" stroke-width="2.4"/>
<rect x="1064.8" y="1350.8" width="23.2" height="22.9" rx="4" fill="#1a73d8"/>
<polyline points="1069.5,1362 1074.5,1367 1083.5,1357.5" fill="none" stroke="#fff" stroke-width="2.4"/>
<path d="M1058,1416.9 H1068.5 L1080.8,1429.2 V1451 Q1080.8,1456 1075.8,1456 H1058 Q1053.3,1456 1053.3,1451 V1421.9 Q1053.3,1416.9 1058,1416.9 Z M1068.5,1417 V1423.5 Q1068.5,1428.5 1073.5,1428.5 H1080.5" fill="none" stroke="#6b6b6b" stroke-width="2.4"/>
<path d="M1060.5,1432.5 V1450.5 M1057.5,1432.5 H1063.5 M1057.5,1450.5 H1063.5" fill="none" stroke="#1a73d8" stroke-width="2.4"/>
<path d="M1048.5,1525 Q1052,1508.5 1067.2,1508.5 Q1082.4,1508.5 1086,1525" fill="none" stroke="#6b6b6b" stroke-width="2.4"/>
<circle cx="1067.2" cy="1524" r="7.6" fill="none" stroke="#6b6b6b" stroke-width="2.4"/>
</svg>
<div class="t" style="left:1119.51px;top:1154.28px;font-size:38.3px;color:#1a1a1a;-webkit-text-stroke:0.5px #fafafa;transform:scaleX(0.9618)">Navigation pane</div>
<div class="t" style="left:1118.92px;top:1244.78px;font-size:38.3px;color:#1a1a1a;-webkit-text-stroke:0.5px #fafafa;transform:scaleX(0.9410)">Compact view</div>
<div class="t" style="left:1118.80px;top:1337.58px;font-size:38.3px;color:#1a1a1a;-webkit-text-stroke:0.5px #fafafa;transform:scaleX(0.9320)">Item check boxes</div>
<div class="t" style="left:1118.82px;top:1420.98px;font-size:38.3px;color:#1a1a1a;-webkit-text-stroke:0.5px #fafafa;transform:scaleX(0.9274)">File name extensions</div>
<div class="t" style="left:1118.71px;top:1504.78px;font-size:38.3px;color:#1a1a1a;-webkit-text-stroke:0.5px #fafafa;transform:scaleX(0.9644)">Hidden items</div>
<svg width="2145" height="1583" viewBox="0 0 2145 1583">
<rect x="598" y="124.8" width="234" height="120" fill="none" stroke="#e97132" stroke-width="13.8"/>
<rect x="454" y="1114.9" width="484" height="99.7" fill="none" stroke="#e97132" stroke-width="13.8"/>
<rect x="942" y="1465.3" width="550" height="99.4" fill="none" stroke="#e97132" stroke-width="13.8"/>
<polygon points="370,154.3 509.6,154.3 509.6,131.4 559.7,177.6 509.6,224 509.6,200.3 370,200.3" fill="#e97132"/>
<polygon points="246.1,1144.5 385.7,1144.5 385.7,1121.4 435.7,1167.6 385.7,1213.7 385.7,1190.6 246.1,1190.6" fill="#e97132"/>
<polygon points="745,1499.4 883.6,1499.4 883.6,1476.6 933.6,1522.5 883.6,1568.4 883.6,1545.2 745,1545.2" fill="#e97132"/>
</svg>
</body></html>
